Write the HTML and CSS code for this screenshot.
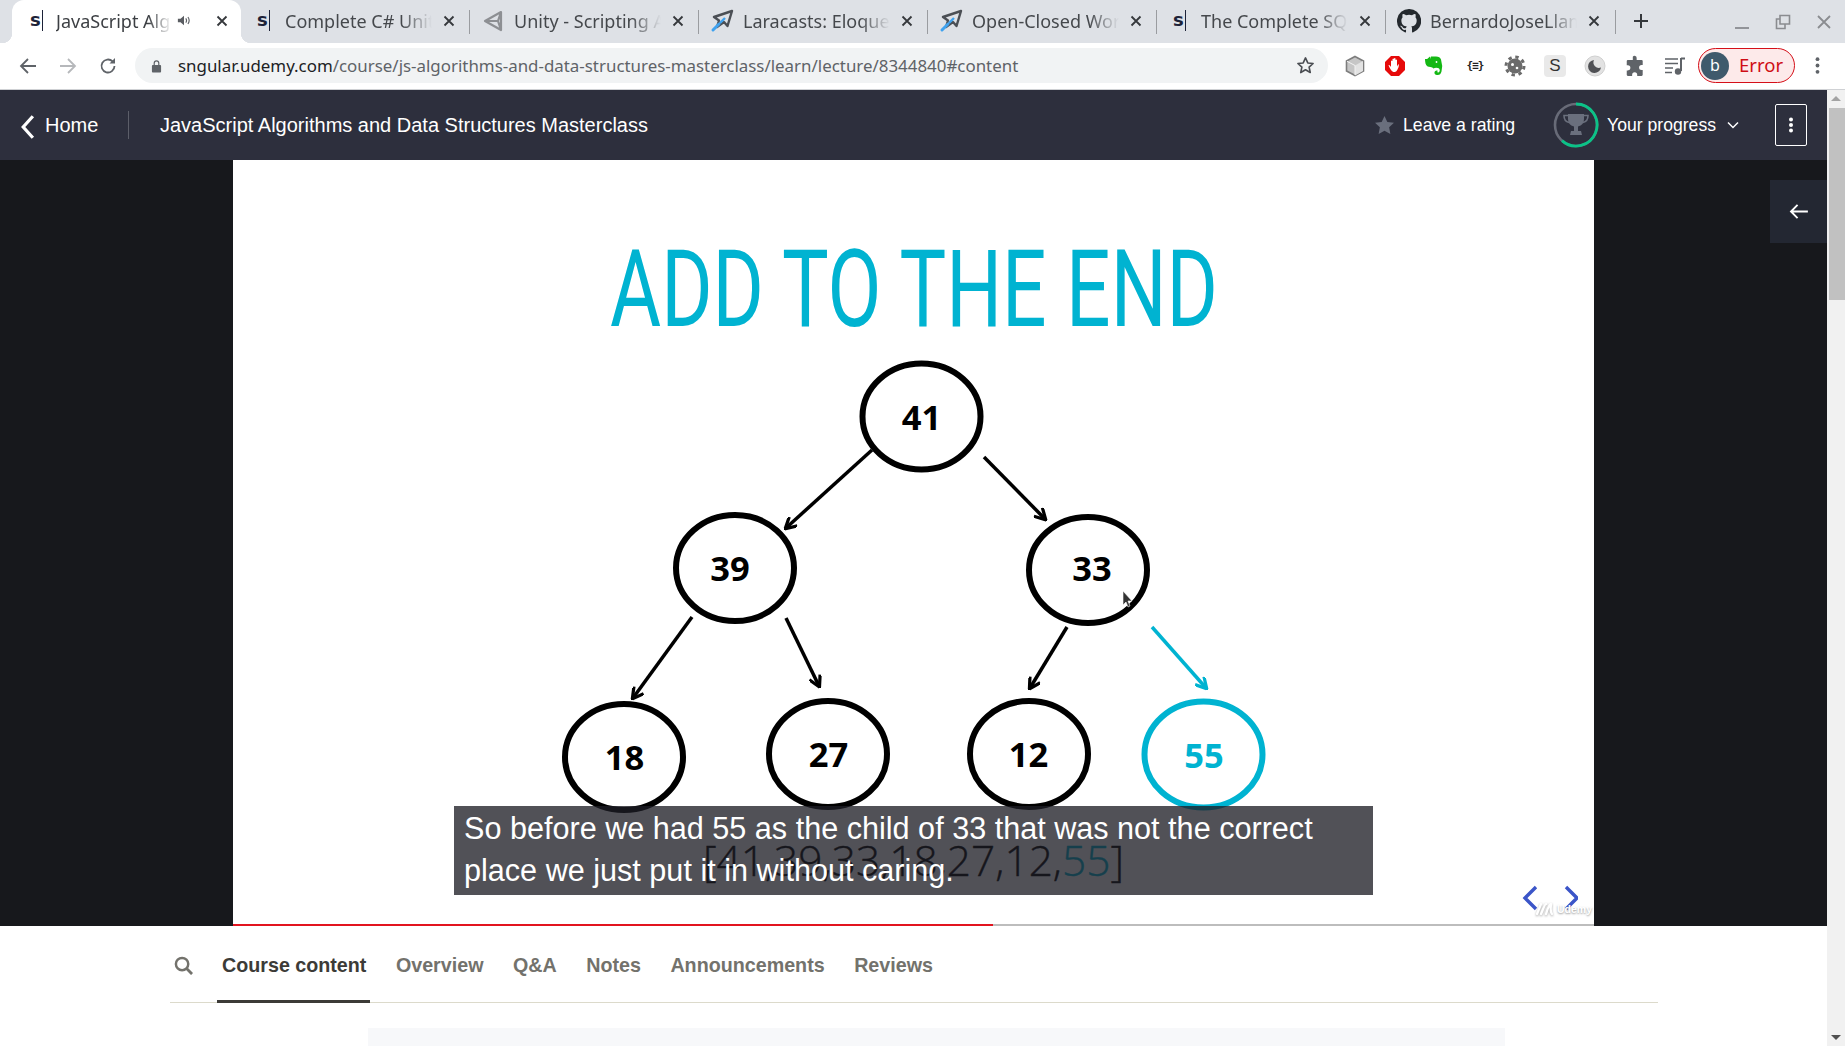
FILE: index.html
```html
<!DOCTYPE html>
<html lang="en">
<head>
<meta charset="utf-8">
<title>JavaScript Algorithms and Data Structures Masterclass</title>
<link rel="stylesheet" href="styles.css">
</head>
<body>
<svg class="defs" width="0" height="0" aria-hidden="true">
  <defs>
    <symbol id="plane" viewBox="0 0 24 24">
      <path d="M22 2 4 8l5 3.500L7 18l7-5 3.500 4z" fill="none" stroke="#4b4f55" stroke-width="2.400" stroke-linejoin="round"/>
      <path d="M9 15 3 21" stroke="#3fa2ef" stroke-width="3" stroke-linecap="round"/>
      <path d="M15 9l-5 5" stroke="#3fa2ef" stroke-width="2.400"/>
    </symbol>
    <symbol id="close" viewBox="0 0 12 12">
      <path d="M1.500 1.500l9 9M10.500 1.500l-9 9" stroke="#35383c" stroke-width="1.800"/>
    </symbol>
  </defs>
</svg>

<header class="tabstrip">
  <div class="tab tab-active">
    <span class="fav-s">s</span>
    <span class="tab-title tab-title-short">JavaScript Algorithms</span>
    <svg class="tab-sound" viewBox="0 0 16 12"><path d="M1 4h3l4-3.500v11L4 8H1z" fill="#5a5d62"/><path d="M10 3.500q1.800 2.500 0 5M12.500 2q2.800 4 0 8" stroke="#5a5d62" stroke-width="1.300" fill="none"/></svg>
    <svg class="tab-close"><use href="#close"/></svg>
  </div>
  <div class="tab">
    <span class="fav-s">s</span>
    <span class="tab-title">Complete C# Unity</span>
    <svg class="tab-close"><use href="#close"/></svg>
  </div>
  <div class="tab tab-sep">
    <svg class="fav" viewBox="0 0 24 24"><path d="M20 3 4 12l16 9zM20 3l-3 9 3 9M4 12h13" fill="none" stroke="#8d8f93" stroke-width="2.200" stroke-linejoin="round"/></svg>
    <span class="tab-title">Unity - Scripting API</span>
    <svg class="tab-close"><use href="#close"/></svg>
  </div>
  <div class="tab tab-sep">
    <svg class="fav"><use href="#plane"/></svg>
    <span class="tab-title">Laracasts: Eloquent</span>
    <svg class="tab-close"><use href="#close"/></svg>
  </div>
  <div class="tab tab-sep">
    <svg class="fav"><use href="#plane"/></svg>
    <span class="tab-title">Open-Closed Work</span>
    <svg class="tab-close"><use href="#close"/></svg>
  </div>
  <div class="tab tab-sep">
    <span class="fav-s">s</span>
    <span class="tab-title">The Complete SQL</span>
    <svg class="tab-close"><use href="#close"/></svg>
  </div>
  <div class="tab tab-sep tab-last">
    <svg class="fav" viewBox="0 0 16 16"><path fill="#24292e" d="M8 0a8 8 0 0 0-2.530 15.590c.400.070.550-.170.550-.380v-1.340c-2.230.480-2.700-1.070-2.700-1.070-.360-.930-.890-1.170-.890-1.170-.730-.500.060-.490.060-.490.800.060 1.230.830 1.230.830.710 1.220 1.870.870 2.330.660.070-.520.280-.870.510-1.070-1.780-.200-3.640-.890-3.640-3.950 0-.870.310-1.590.820-2.150-.080-.200-.360-1.020.080-2.120 0 0 .670-.210 2.200.820a7.600 7.600 0 0 1 4 0c1.530-1.040 2.200-.820 2.200-.820.440 1.100.160 1.920.080 2.120.510.560.820 1.270.820 2.150 0 3.070-1.870 3.750-3.650 3.950.290.250.540.730.540 1.480v2.200c0 .210.150.460.550.380A8 8 0 0 0 8 0z"/></svg>
    <span class="tab-title">BernardoJoseLlamas</span>
    <svg class="tab-close"><use href="#close"/></svg>
  </div>
  <svg class="newtab" viewBox="0 0 16 16"><path d="M8 1v14M1 8h14" stroke="#35383c" stroke-width="2"/></svg>
  <div class="winctl">
    <svg viewBox="0 0 16 16"><path d="M1 14h14" stroke="#8a8c90" stroke-width="1.800"/></svg>
    <svg viewBox="0 0 16 16"><path d="M5 1.500h9.500V10H5zM5 5H1.500v9.500H10V10" fill="none" stroke="#8a8c90" stroke-width="1.600"/></svg>
    <svg viewBox="0 0 16 16"><path d="M2 2l12 12M14 2 2 14" stroke="#8a8c90" stroke-width="1.800"/></svg>
  </div>
</header>

<nav class="toolbar">
  <svg class="nav-ico" viewBox="0 0 18 18"><path d="M17 9H2M9 2 2 9l7 7" fill="none" stroke="#5f6368" stroke-width="1.800"/></svg>
  <svg class="nav-ico" viewBox="0 0 18 18"><path d="M1 9h15M9 2l7 7-7 7" fill="none" stroke="#b6b8bb" stroke-width="1.800"/></svg>
  <svg class="nav-ico" viewBox="0 0 18 18"><path d="M15.500 9a6.500 6.500 0 1 1-1.900-4.600" fill="none" stroke="#5f6368" stroke-width="1.800"/><path d="M16 1v5.500h-5.500z" fill="#5f6368"/></svg>
  <div class="omnibox">
    <svg class="lock" viewBox="0 0 12 14"><path d="M2 6h8a1 1 0 0 1 1 1v6a1 1 0 0 1-1 1H2a1 1 0 0 1-1-1V7a1 1 0 0 1 1-1z" fill="#5f6368"/><path d="M3.500 6V4a2.500 2.500 0 0 1 5 0v2" fill="none" stroke="#5f6368" stroke-width="1.300"/></svg>
    <span class="url"><b class="url-host">sngular.udemy.com</b>/course/js-algorithms-and-data-structures-masterclass/learn/lecture/8344840#content</span>
    <svg class="bookmark" viewBox="0 0 20 20"><path d="m10 2 2.400 5.300 5.600.600-4.200 3.800 1.200 5.700-5-2.900-5 2.900 1.200-5.700L2 7.900l5.600-.600z" fill="none" stroke="#4a4d52" stroke-width="1.700" stroke-linejoin="round"/></svg>
  </div>
  <div class="extensions">
    <svg class="ext" viewBox="0 0 22 22"><path d="M11 1.500 19.500 6v10L11 20.500 2.500 16V6z" fill="#c6c6c6" stroke="#7d7d7d" stroke-width="1.600"/><path d="M11 10.500 19 6v10l-8 4.500z" fill="#e3e3e3"/><path d="M3 6.300l8 4.200v9.500" fill="none" stroke="#f3f3f3" stroke-width="1"/></svg>
    <svg class="ext" viewBox="0 0 22 22"><path d="M7 1h8l6 6v8l-6 6H7l-6-6V7z" fill="#e60a0a"/><path d="M7 15c-1-2-2-3-2.500-5 1 0 1.500.500 2.500 2V6q.800-1 1.500 0v3-5q.800-1 1.500 0v5V3.500q.800-1 1.500 0V9V5q.800-1 1.500 0v6.500q.700-2 2-2.500 0 3-1.500 5.500-1 2-2.500 2.500H9.500Q8 16.500 7 15z" fill="#fff"/></svg>
    <svg class="ext" viewBox="0 0 22 22"><path d="M2 5 6 1.500v3.700H2zM7 1.500h5q4 0 5 3 2 6 .5 12-1 4-4.500 3.500-3-.500-2.500-3 .500-2 3-1.500 .500 1-.500 1.500 1.500 1 2.500-.500 1-2.500-1.500-3.500-3-.500-4.500.500-1-1.500-3-1.500-4 0-5-3.500-.500-2-.500-4.500h4q1.500 0 1.500-1.500z" fill="#14b814"/><circle cx="12.500" cy="7" r=".900" fill="#fff"/></svg>
    <span class="ext ext-braces">{≡}</span>
    <svg class="ext" viewBox="0 0 22 22"><circle cx="11" cy="11" r="7.500" fill="#6b6b6b"/><circle cx="11" cy="11" r="9" fill="none" stroke="#6b6b6b" stroke-width="3" stroke-dasharray="3.400 3.670"/><circle cx="8.500" cy="9.500" r="1.500" fill="#fff"/><circle cx="13" cy="13" r="1.300" fill="#fff"/></svg>
    <span class="ext ext-s">S</span>
    <svg class="ext" viewBox="0 0 22 22"><circle cx="11" cy="11" r="10" fill="#e2e2e2" stroke="#d0d0d0"/><path d="M10 5a6.500 6.500 0 1 0 7 7.500A5.500 5.500 0 0 1 10 5z" fill="#4f5054"/></svg>
    <svg class="ext" viewBox="0 0 20 20"><path d="M8 1.500a2 2 0 0 1 3.500 1.500v1.500H16a1 1 0 0 1 1 1V9h-1a2.300 2.300 0 0 0 0 4.600h1V18a1 1 0 0 1-1 1h-4v-1a2.300 2.300 0 0 0-4.600 0v1H3.500a1 1 0 0 1-1-1v-4h1a2.300 2.300 0 0 0 0-4.600h-1V5.500a1 1 0 0 1 1-1H8z" fill="#5f6368"/></svg>
    <svg class="ext" viewBox="0 0 22 22"><path d="M1 4h13M1 8.500h13M1 13h8M1 17.500h7" stroke="#5f6368" stroke-width="1.700"/><path d="M17 3.500h4M17 3v13" stroke="#5f6368" stroke-width="2"/><circle cx="14" cy="16.500" r="3.200" fill="#5f6368"/></svg>
  </div>
  <div class="profile">
    <span class="avatar">b</span>
    <span class="profile-label">Error</span>
  </div>
  <svg class="menu-dots" viewBox="0 0 4 18"><circle cx="2" cy="3" r="1.800"/><circle cx="2" cy="9" r="1.800"/><circle cx="2" cy="15" r="1.800"/></svg>
</nav>

<div class="page">
  <main class="content">
    <div class="coursebar">
      <a class="home">
        <svg class="home-chevron" viewBox="0 0 14 24"><path d="M12 2 3 12l9 10" fill="none" stroke="#fff" stroke-width="3"/></svg>
        <span>Home</span>
      </a>
      <span class="course-title">JavaScript Algorithms and Data Structures Masterclass</span>
      <div class="rating">
        <svg class="rating-star" viewBox="0 0 20 19"><path d="m10 0 3 6.300 7 .900-5.100 4.800 1.300 7L10 15.600 3.800 19l1.300-7L0 7.200l7-.900z" fill="#6a6f7d"/></svg>
        <span>Leave a rating</span>
      </div>
      <div class="progress">
        <svg class="ring" viewBox="0 0 46 46">
          <circle cx="23" cy="23" r="21" fill="none" stroke="#686b78" stroke-width="2.600"/>
          <path d="M23 2a21 21 0 1 1-14 36.600" fill="none" stroke="#0bc287" stroke-width="2.800"/>
          <path d="M15 12h16v5q0 6-6 7.500V29h3l1 4H17l1-4h3v-4.500Q15 23 15 17z" fill="#6a6f7d"/>
          <path d="M15 13.500h-4q0 6 5 7M31 13.500h4q0 6-5 7" fill="none" stroke="#6a6f7d" stroke-width="1.600"/>
        </svg>
        <span>Your progress</span>
        <svg class="progress-chevron" viewBox="0 0 12 8"><path d="m1 1.500 5 5 5-5" fill="none" stroke="#fff" stroke-width="1.500"/></svg>
      </div>
      <button class="more" type="button" aria-label="More">
        <svg viewBox="0 0 4 16"><circle cx="2" cy="2.500" r="2" fill="#fff"/><circle cx="2" cy="8" r="2" fill="#fff"/><circle cx="2" cy="13.500" r="2" fill="#fff"/></svg>
      </button>
    </div>

    <section class="player">
      <div class="slide">
        <svg class="slide-art" viewBox="233 160 1361 764">
          <defs>
            <marker id="ah" viewBox="0 0 12 12" refX="10" refY="6" markerWidth="13" markerHeight="13" markerUnits="userSpaceOnUse" orient="auto"><path d="M1 .5 11 6 1 11.500" fill="none" stroke="#000" stroke-width="3"/></marker>
            <marker id="ahb" viewBox="0 0 12 12" refX="10" refY="6" markerWidth="13" markerHeight="13" markerUnits="userSpaceOnUse" orient="auto"><path d="M1 .5 11 6 1 11.500" fill="none" stroke="#00b3d1" stroke-width="3"/></marker>
          </defs>
          <text class="art-title" x="610" y="326" textLength="608" lengthAdjust="spacingAndGlyphs">ADD TO THE END</text>
          <g class="edges">
            <line x1="872" y1="450" x2="786" y2="528" marker-end="url(#ah)"/>
            <line x1="984" y1="457" x2="1045" y2="519" marker-end="url(#ah)"/>
            <line x1="692" y1="617" x2="633" y2="698" marker-end="url(#ah)"/>
            <line x1="786" y1="618" x2="819" y2="686" marker-end="url(#ah)"/>
            <line x1="1067" y1="627" x2="1030" y2="688" marker-end="url(#ah)"/>
            <line class="edge-new" x1="1152" y1="627" x2="1206" y2="688" marker-end="url(#ahb)"/>
          </g>
          <g class="nodes">
            <ellipse cx="921.500" cy="416.500" rx="59" ry="53"/>
            <ellipse cx="735" cy="568" rx="59" ry="53"/>
            <ellipse cx="1088" cy="570" rx="59" ry="53"/>
            <ellipse cx="624" cy="757" rx="59" ry="53"/>
            <ellipse cx="828" cy="754" rx="59" ry="53"/>
            <ellipse cx="1029" cy="754" rx="59" ry="53"/>
            <ellipse class="node-new" cx="1203.500" cy="754.500" rx="59" ry="53"/>
          </g>
          <g class="labels">
            <text x="921.500" y="430">41</text>
            <text x="730" y="581">39</text>
            <text x="1092" y="581">33</text>
            <text x="624.500" y="770">18</text>
            <text x="828.500" y="767">27</text>
            <text x="1028.500" y="767">12</text>
            <text class="label-new" x="1204" y="768">55</text>
          </g>
          <path class="pointer" d="M1123 591v14l3-3 2 5 2-1-2-5h4z"/>
          <text class="art-array" x="703" y="876" textLength="421" lengthAdjust="spacingAndGlyphs">[41,39,33,18,27,12,<tspan class="array-new">55</tspan>]</text>
        </svg>
        <div class="caption">So before we had 55 as the child of 33 that was not the correct<br>place we just put it in without caring.</div>
        <svg class="nav-arrows" viewBox="0 0 56 28"><path d="M14 3 3 14l11 11M44 3l11 11-11 11" fill="none" stroke="#3b55c8" stroke-width="3.400"/></svg>
        <div class="watermark">
          <svg class="watermark-logo" viewBox="0 0 20 16"><path d="M2 13 6 3M6 13q4-10 5-10M11 13q3-10 5-10M16 3q-1 8 1 10" fill="none" stroke="#fff" stroke-width="2.400" stroke-linecap="round"/></svg>
          <span>Udemy</span>
        </div>
      </div>
      <div class="sidebar-toggle">
        <svg viewBox="0 0 20 16"><path d="M20 8H2M9 1 2 8l7 7" fill="none" stroke="#fff" stroke-width="2"/></svg>
      </div>
      <div class="progress-track"><div class="progress-fill"></div></div>
    </section>

    <div class="tabs-wrap">
      <div class="tabs">
        <svg class="tabs-search" viewBox="0 0 20 20"><circle cx="8.500" cy="8.500" r="6.500" fill="none" stroke="#73726c" stroke-width="2.600"/><path d="m13 13 6 6" stroke="#73726c" stroke-width="3"/></svg>
        <span class="tab-link tab-link-active">Course content</span>
        <span class="tab-link">Overview</span>
        <span class="tab-link">Q&amp;A</span>
        <span class="tab-link">Notes</span>
        <span class="tab-link">Announcements</span>
        <span class="tab-link">Reviews</span>
      </div>
      <div class="panel"></div>
    </div>
  </main>
  <aside class="scrollbar">
    <svg class="scroll-btn" viewBox="0 0 18 18"><path d="M9 6l5 5H4z" fill="#a3a3a3"/></svg>
    <div class="scroll-track"><div class="scroll-thumb"></div></div>
    <svg class="scroll-btn" viewBox="0 0 18 18"><path d="M4 7h10l-5 5z" fill="#505050"/></svg>
  </aside>
</div>
</body>
</html>
```
FILE: styles.css
```css
* { box-sizing: border-box; }
html, body { margin: 0; height: 100%; overflow: hidden; }
body { width: 1845px; height: 1046px; background: #fff; font-family: "Liberation Sans", Arial, sans-serif; display: flex; flex-direction: column; }
.defs { position: absolute; }

/* tab strip */
.tabstrip { height: 43px; flex: none; background: #dee1e6; display: flex; align-items: stretch; padding-left: 12px; font-family: "Noto Sans", sans-serif; }
.tab { width: 229px; flex: none; display: flex; align-items: center; padding: 0 15px 2px 16px; position: relative; color: #45484c; font-size: 18px; }
.tab-active { background: #fff; border-radius: 12px 12px 0 0; color: #3c3f43; padding-left: 18px; }
.tab-active::before, .tab-active::after { content: ""; position: absolute; bottom: 0; width: 10px; height: 10px; }
.tab-active::before { left: -10px; background: radial-gradient(circle at 0 0, transparent 10px, #fff 10.500px); }
.tab-active::after { right: -10px; background: radial-gradient(circle at 100% 0, transparent 10px, #fff 10.500px); }
.tab-sep::before { content: ""; position: absolute; left: -1px; top: 10px; height: 24px; width: 1px; background: #9a9ca0; }
.tab-last::after { content: ""; position: absolute; right: -1px; top: 10px; height: 24px; width: 1px; background: #9a9ca0; }
.fav-s { flex: none; font: 700 18px "DejaVu Sans", sans-serif; color: #1c2238; border-right: 1px solid #1c2238; height: 21px; line-height: 20px; width: 13px; margin-right: 15px; }
.tab-active .fav-s { margin-right: 13px; }
.fav { width: 24px; height: 24px; flex: none; margin: 0 9px 0 -5px; }
.tab-title { flex: 1; min-width: 0; overflow: hidden; white-space: nowrap; -webkit-mask-image: linear-gradient(to right, #000 78%, transparent 98%); mask-image: linear-gradient(to right, #000 78%, transparent 98%); }
.tab-title-short { flex: 0 0 118px; }
.tab-sound { width: 14px; height: 11px; margin: 0 14px 0 3px; flex: none; }
.tab-close { width: 12px; height: 12px; flex: none; margin-left: 8px; }
.tab-active .tab-close { margin-left: 11px; }
.newtab { width: 16px; height: 16px; margin: 13px 0 0 18px; flex: none; }
.winctl { margin-left: auto; display: flex; align-items: center; gap: 25px; padding-right: 13px; }
.winctl svg { width: 16px; height: 16px; }

/* toolbar */
.toolbar { height: 47px; flex: none; background: #fff; border-bottom: 1px solid #cfd1d4; display: flex; align-items: center; padding: 0 0 1px 19px; }
.nav-ico { width: 18px; height: 18px; flex: none; margin-right: 22px; }
.omnibox { width: 1193px; height: 35px; margin-left: -4px; flex: none; background: #f1f3f4; border-radius: 18px; display: flex; align-items: center; padding: 0 13px 0 16px; font-family: "Noto Sans", sans-serif; }
.lock { width: 11px; height: 14px; flex: none; margin-right: 16px; }
.url { flex: 1; font-size: 16.900px; color: #5f6368; white-space: nowrap; }
.url-host { font-weight: 400; color: #202124; }
.bookmark { width: 19px; height: 19px; flex: none; }
.extensions { display: flex; align-items: center; gap: 18px; margin-left: 16px; }
.ext { width: 22px; height: 22px; flex: none; }
.ext-braces { font: 700 11px "DejaVu Sans Mono", monospace; color: #222; text-align: center; line-height: 22px; letter-spacing: -1px; }
.ext-s { background: #e9e9e9; border-radius: 4px; font: 400 17px "Liberation Sans", sans-serif; line-height: 22px; text-align: center; color: #333; }
.profile { width: 97px; height: 35px; flex: none; margin-left: 12px; border: 1px solid #d50f18; border-radius: 18px; background: #fdeaea; display: flex; align-items: center; padding: 0 0 2px 2px; font-family: "Noto Sans", sans-serif; }
.avatar { width: 28px; height: 28px; border-radius: 50%; background: #3f5a6c; color: #fff; font-size: 16px; text-align: center; line-height: 27px; flex: none; margin-top: 2px; }
.profile-label { margin-left: 10px; color: #cf0d15; font-size: 18.500px; }
.menu-dots { width: 5px; height: 19px; flex: none; margin-left: 20px; fill: #5f6368; }

/* page */
.page { flex: 1; min-height: 0; display: flex; }
.content { flex: 1; min-width: 0; display: flex; flex-direction: column; }
.coursebar { height: 70px; flex: none; background: #2d2f3d; color: #fff; display: flex; align-items: center; font-size: 20px; padding: 0 20px; }
.home { display: flex; align-items: center; gap: 10px; height: 28px; width: 109px; border-right: 1px solid #5c5e69; flex: none; }
.home-chevron { width: 15px; height: 26px; flex: none; margin-top: 3px; }
.course-title { margin-left: 31px; flex: 1; }
.rating { display: flex; align-items: center; gap: 9px; font-size: 17.700px; margin-right: 38px; }
.rating-star { width: 19px; height: 18px; flex: none; }
.progress { display: flex; align-items: center; font-size: 17.600px; }
.ring { width: 46px; height: 46px; flex: none; margin-right: 8px; }
.progress-chevron { width: 12px; height: 8px; flex: none; margin-left: 11px; }
.more { width: 32px; height: 42px; margin-left: 36px; flex: none; background: none; border: 1px solid #fff; border-radius: 2px; padding: 0; display: flex; align-items: center; justify-content: center; }
.more svg { width: 4px; height: 16px; }

/* player */
.player { height: 766px; flex: none; background: #17181c; position: relative; padding-left: 233px; }
.slide { width: 1361px; height: 766px; background: #fff; position: relative; }
.slide-art { display: block; width: 1361px; height: 764px; }
.art-title { font: 400 107px Roboto, sans-serif; fill: #00b3d1; }
.edges line { stroke: #000; stroke-width: 3.500px; }
.edges .edge-new { stroke: #00b3d1; }
.nodes ellipse { fill: none; stroke: #000; stroke-width: 6px; }
.nodes .node-new { stroke: #00b3d1; }
.labels text { font: 700 34.500px "Open Sans", sans-serif; text-anchor: middle; fill: #000; }
.labels .label-new { fill: #00b3d1; }
.pointer { fill: #333; stroke: #fff; stroke-width: .6px; }
.art-array { font: 300 42px "Open Sans", sans-serif; fill: #000; stroke: #000; stroke-width: .4px; }
.array-new { fill: #00b3d1; stroke: #00b3d1; }
.caption { position: absolute; left: 221px; top: 646px; width: 919px; height: 89px; background: rgba(28, 29, 36, .77); color: #fff; font-size: 30.600px; line-height: 41.500px; padding: 2px 10px; }
.nav-arrows { position: absolute; left: 1289px; top: 724px; width: 56px; height: 28px; }
.watermark { position: absolute; left: 1302px; top: 741px; display: flex; align-items: center; gap: 2px; font: 700 10.500px "Liberation Sans", sans-serif; color: #fff; text-shadow: 0 1px 2px #999; }
.watermark-logo { width: 20px; height: 16px; flex: none; filter: drop-shadow(0 1px 1px #aaa); }
.sidebar-toggle { position: absolute; left: 1770px; top: 20px; width: 57px; height: 63px; background: #232732; display: flex; align-items: center; justify-content: center; }
.sidebar-toggle svg { width: 19px; height: 15px; }
.progress-track { position: absolute; left: 233px; bottom: 0; width: 1361px; height: 2px; background: #bdbdbd; }
.progress-fill { width: 760px; height: 2px; background: #e2141f; }

/* lower tabs */
.tabs-wrap { flex: 1; min-height: 0; background: #fff; }
.tabs { margin: 0 169px 0 170px; height: 77px; border-bottom: 1px solid #dcdacb; display: flex; align-items: center; font-size: 19.700px; font-weight: 700; color: #73726c; padding-top: 2px; }
.tabs-search { width: 19px; height: 19px; flex: none; margin: 0 29px 0 4px; }
.tab-link { margin-right: 29.500px; }
.tab-link-active { color: #3c3b37; position: relative; }
.tab-link-active::after { content: ""; position: absolute; left: -5px; right: -4px; top: 46px; height: 3px; background: #3c3b37; }
.panel { margin: 25px 0 0 368px; width: 1137px; height: 30px; background: #f7f8fa; }

/* scrollbar */
.scrollbar { width: 18px; flex: none; background: #f1f1f1; display: flex; flex-direction: column; }
.scroll-btn { width: 18px; height: 18px; flex: none; }
.scroll-track { flex: 1; }
.scroll-thumb { height: 192px; background: #c1c1c1; margin-left: 2px; }
```
